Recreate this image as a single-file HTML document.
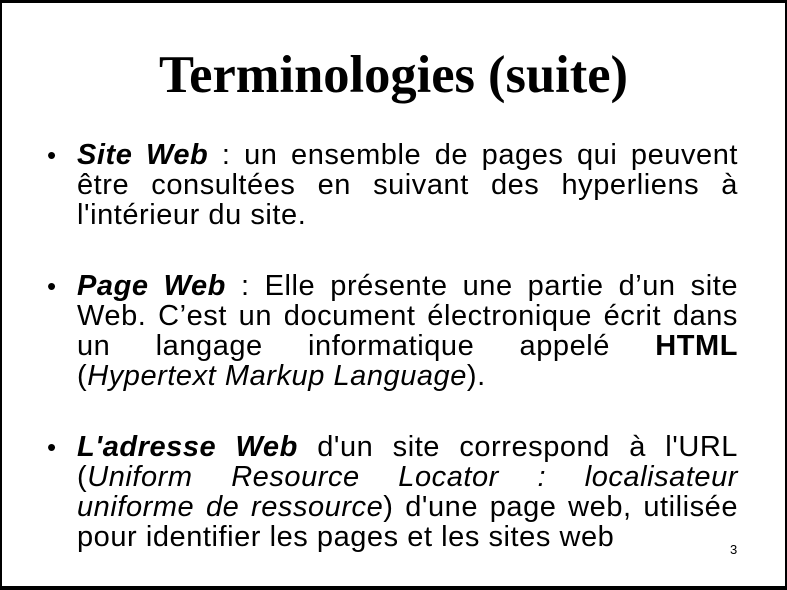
<!DOCTYPE html>
<html><head><meta charset="utf-8"><style>
html,body{margin:0;padding:0;background:#fff}
.frame{position:absolute;left:0;top:0;width:787px;height:590px;box-sizing:border-box;border-style:solid;border-color:#000;border-width:3px 2px 4px 2px;}
h1{position:absolute;left:0;width:787px;top:44px;margin:0;text-align:center;font:bold 52.5px/62px "Liberation Serif",serif;color:#000}
.p{position:absolute;left:77px;width:661px;font:29px/30px "Liberation Sans",sans-serif;color:#000;letter-spacing:0.55px}
.p div{white-space:nowrap;overflow:visible}
.j{text-align:justify;text-align-last:justify}
.b{position:absolute;left:-30px;top:0;font-size:26px}
.n{position:absolute;left:730px;top:542px;font:13px "Liberation Sans",sans-serif}
</style></head><body>
<div class="frame"></div>
<h1>Terminologies (suite)</h1>
<div class="p" style="top:140px"><span class="b">•</span>
<div class="j"><b><i>Site Web</i></b> : un ensemble de pages qui peuvent</div>
<div class="j">être consultées en suivant des hyperliens à</div>
<div>l'intérieur du site.</div></div>
<div class="p" style="top:271px"><span class="b">•</span>
<div class="j"><b><i>Page Web</i></b> : Elle présente une partie d’un site</div>
<div class="j">Web. C’est un document électronique écrit dans</div>
<div class="j">un langage informatique appelé <b>HTML</b></div>
<div>(<i>Hypertext Markup Language</i>).</div></div>
<div class="p" style="top:432px"><span class="b">•</span>
<div class="j"><b><i>L'adresse Web</i></b> d'un site correspond à l'URL</div>
<div class="j">(<i>Uniform Resource Locator : localisateur</i></div>
<div class="j"><i>uniforme de ressource</i>) d'une page web, utilisée</div>
<div>pour identifier les pages et les sites web</div></div>
<div class="n">3</div>
</body></html>
